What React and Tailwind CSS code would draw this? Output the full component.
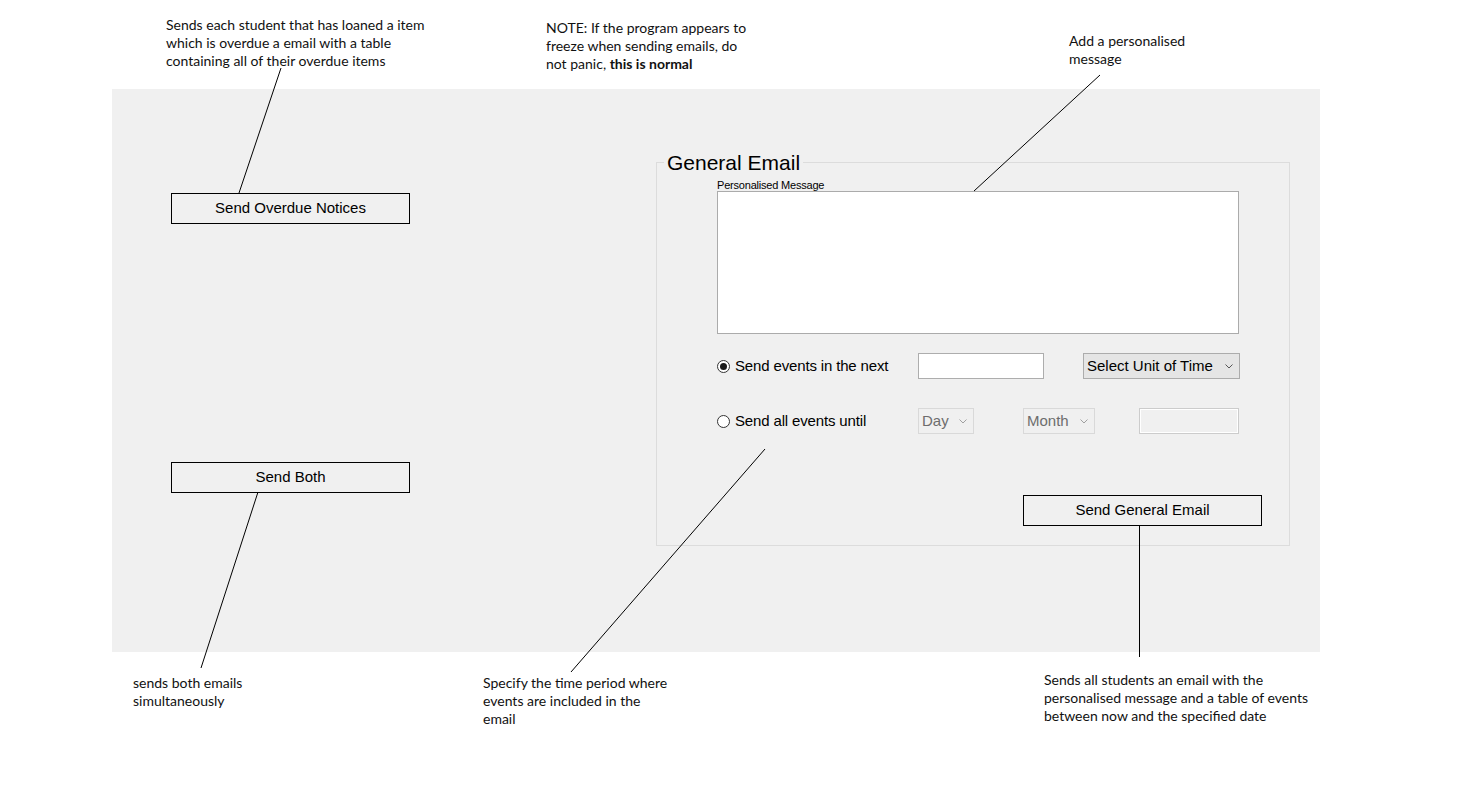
import React from 'react';

const ui = { fontFamily: '"Liberation Sans", Arial, sans-serif' };
const note = { fontFamily: 'Lato, "Open Sans", sans-serif' };

const Chevron = ({ color = '#555' }) => (
    <svg width="8" height="5" viewBox="0 0 8 5" className="shrink-0">
        <path d="M0.5 0.5 L4 4 L7.5 0.5" fill="none" stroke={color} strokeWidth="1"/>
    </svg>
);

const Radio = ({ checked }) => (
    <span className="w-[13px] h-[13px] rounded-full border border-[#333] bg-white flex items-center justify-center shrink-0">
        {checked && <span className="w-[7px] h-[7px] rounded-full bg-[#1a1a1a]"></span>}
    </span>
);

const WinButton = ({ label }) => (
    <div className="w-[239px] h-[31px] border border-black bg-[#f0f0f0] flex items-center justify-center text-[15px] text-black">
        {label}
    </div>
);

const Callout = ({ className, children }) => (
    <div className={`absolute text-[14px] leading-[18px] text-[#111] ${className}`} style={note}>
        {children}
    </div>
);

const App = () => {
    return (
        <div className="relative w-[1473px] h-[791px] bg-white overflow-hidden">
            <div className="pt-[89px] pl-[112px]">
                <div className="w-[1208px] h-[563px] bg-[#f0f0f0] flex" style={ui}>
                    {/* left column */}
                    <div className="pl-[59px] pt-[104px] flex flex-col gap-[238px]">
                        <WinButton label="Send Overdue Notices"/>
                        <WinButton label="Send Both"/>
                    </div>

                    {/* general email group */}
                    <fieldset className="ml-[246px] mt-[61px] w-[634px] h-[396px] border border-[#dcdcdc]">
                        <legend className="ml-[7px] px-[3px] text-[21px] leading-[25px] text-black">General Email</legend>
                        <div className="pl-[60px]">
                            <div className="mt-[4px] text-[11px] leading-[12px] text-black tracking-[-0.2px]">Personalised Message</div>
                            <div className="w-[522px] h-[143px] bg-white border border-[#ababab]"></div>

                            <div className="mt-[19px] flex items-center h-[26px]">
                                <div className="w-[201px] flex items-center gap-[5px] text-[15px] tracking-[-0.15px] text-black">
                                    <Radio checked/>
                                    <span>Send events in the next</span>
                                </div>
                                <div className="w-[126px] h-[26px] bg-white border border-[#adadad]"></div>
                                <div className="ml-[39px] w-[157px] h-[26px] bg-[#e5e5e5] border border-[#acacac] flex items-center justify-between pl-[3px] pr-[6px] text-[15px] text-black">
                                    <span>Select Unit of Time</span>
                                    <Chevron/>
                                </div>
                            </div>

                            <div className="mt-[29px] flex items-center h-[26px]">
                                <div className="w-[201px] flex items-center gap-[5px] text-[15px] tracking-[-0.15px] text-black">
                                    <Radio/>
                                    <span>Send all events until</span>
                                </div>
                                <div className="w-[56px] h-[26px] border border-[#d9d9d9] flex items-center justify-between pl-[3px] pr-[6px] text-[15px] text-[#6d6d6d]">
                                    <span>Day</span>
                                    <Chevron color="#a0a0a0"/>
                                </div>
                                <div className="ml-[49px] w-[72px] h-[26px] border border-[#d9d9d9] flex items-center justify-between pl-[3px] pr-[6px] text-[15px] text-[#6d6d6d]">
                                    <span>Month</span>
                                    <Chevron color="#a0a0a0"/>
                                </div>
                                <div className="ml-[44px] w-[100px] h-[26px] border border-[#cccccc] bg-[#f0f0f0] shadow-[inset_0_0_0_1px_#ffffff]"></div>
                            </div>

                            <div className="mt-[61px] pl-[306px]">
                                <WinButton label="Send General Email"/>
                            </div>
                        </div>
                    </fieldset>
                </div>
            </div>

            {/* leader lines */}
            <svg className="absolute inset-0 pointer-events-none" width="1473" height="791">
                <g stroke="#000" strokeWidth="1" fill="none">
                    <line x1="281" y1="68" x2="239" y2="193"/>
                    <line x1="1100" y1="75" x2="974" y2="191"/>
                    <line x1="258" y1="492" x2="201" y2="668"/>
                    <line x1="765" y1="449" x2="571" y2="672"/>
                    <line x1="1139.5" y1="525" x2="1139.5" y2="657"/>
                </g>
            </svg>

            <Callout className="left-[166px] top-[16px] w-[290px]">
                Sends each student that has loaned a item<br/>
                which is overdue a email with a table<br/>
                containing all of their overdue items
            </Callout>
            <Callout className="left-[546px] top-[19px] w-[230px]">
                NOTE: If the program appears to<br/>
                freeze when sending emails, do<br/>
                not panic, <b>this is normal</b>
            </Callout>
            <Callout className="left-[1069px] top-[32px] w-[170px]">
                Add a personalised<br/>
                message
            </Callout>
            <Callout className="left-[133px] top-[674px] w-[170px]">
                sends both emails<br/>
                simultaneously
            </Callout>
            <Callout className="left-[483px] top-[674px] w-[230px]">
                Specify the time period where<br/>
                events are included in the<br/>
                email
            </Callout>
            <Callout className="left-[1044px] top-[671px] w-[310px]">
                Sends all students an email with the<br/>
                personalised message and a table of events<br/>
                between now and the specified date
            </Callout>
        </div>
    );
}

export default App;
